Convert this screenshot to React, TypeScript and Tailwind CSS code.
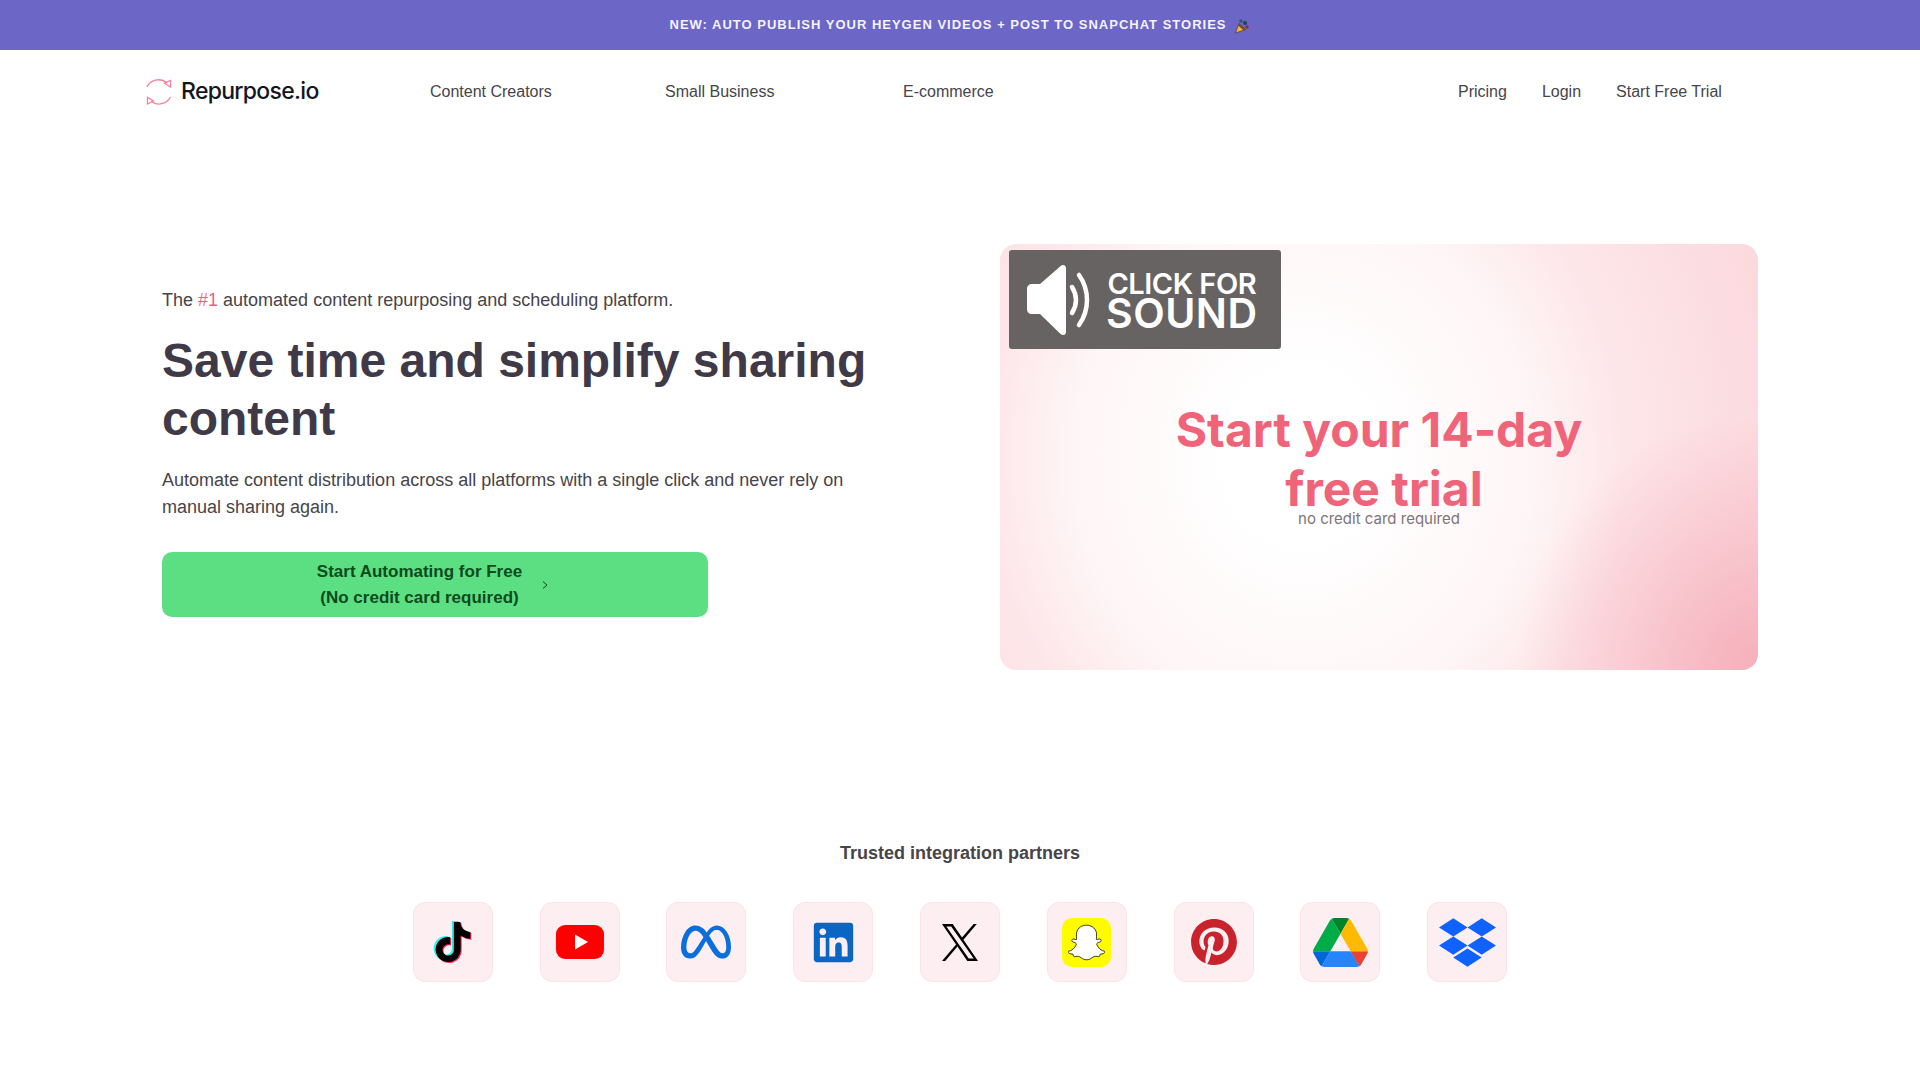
import React from "react";
import { SiTiktok, SiMeta, SiSnapchat, SiPinterest } from "react-icons/si";
import { FaDropbox, FaLinkedin } from "react-icons/fa";

const sans = "font-['Liberation_Sans',Arial,sans-serif]";
const inter = "font-['Inter',sans-serif]";

const Logo = () => (
  <svg width="26" height="30" viewBox="0 0 26 30" fill="none" stroke="#f4829b" strokeWidth="1.3">
    <path d="M1 10C4 3 14 0 21 6" />
    <path d="M24.500 3.500V10L18.500 6.200Z" />
    <path d="M24.500 20C21 27 11 29.500 5 24" />
    <path d="M1.500 20.500V27L7.500 24Z" />
  </svg>
);

const Speaker = () => (
  <svg width="66" height="70" viewBox="0 0 66 70" fill="#fff">
    <path d="M36 0c2 0 3 1 3 4v62c0 3-1 4-3 4-1.500 0-2.500-1-4-2.500L13 49H5c-3 0-5-2-5-5V24c0-3 2-5 5-5h8L32 2.500C33.500 1 34.500 0 36 0z" />
    <path d="M45 22c2.500 4 4 8 4 13s-1.500 9-4 13" fill="none" stroke="#fff" strokeWidth="4.500" strokeLinecap="round" />
    <path d="M52 10c5 7 8 15 8 25s-3 18-8 25" fill="none" stroke="#fff" strokeWidth="4.500" strokeLinecap="round" />
  </svg>
);

const Popper = () => (
  <svg width="16" height="16" viewBox="0 0 16 16" className="ml-[8px] mt-[1px]">
    <path d="M1.500 15L5 5.500l6.500 6z" fill="#f5b63a" stroke="#3a2a10" strokeWidth="0.600" />
    <path d="M5 5.500l6.500 6-2 .8-5.500-5z" fill="#6a4a22" />
    <circle cx="7" cy="3" r="1.800" fill="#1f5f7a" />
    <circle cx="11" cy="5" r="2" fill="#23414f" />
    <circle cx="13" cy="9" r="1.800" fill="#8a2f3d" />
  </svg>
);

const TikTok = () => (
  <span className="relative block w-[40px] h-[40px]">
    <SiTiktok size={40} className="absolute left-[-1.5px] top-[-1px] text-[#25f4ee]" />
    <SiTiktok size={40} className="absolute left-[1.5px] top-[1px] text-[#fe2c55]" />
    <SiTiktok size={40} className="absolute left-0 top-0 text-black" />
  </span>
);

const YouTube = () => (
  <svg width="48" height="34" viewBox="0 0 48 34">
    <rect width="48" height="34" rx="9" fill="#ff0000" />
    <path d="M19 9.500L32 17 19 24.500z" fill="#fff" />
  </svg>
);

const XLogo = () => (
  <svg width="36" height="37" viewBox="0 0 1200 1227" fill="#000">
    <path d="M714.163 519.284L1160.89 0H1055.03L667.137 450.887L357.328 0H0L468.492 681.821L0 1226.37H105.866L515.491 750.218L842.672 1226.37H1200L714.137 519.284H714.163ZM569.165 687.828L521.697 619.934L144.011 79.6944H306.615L611.412 515.685L658.88 583.579L1055.08 1150.3H892.476L569.165 687.854V687.828Z" />
  </svg>
);

const Snap = () => (
  <span className="flex w-[49px] h-[49px] items-center justify-center rounded-[10px] bg-[#fffc00]">
    <SiSnapchat size={37} className="text-white stroke-black [stroke-width:0.5px]" />
  </span>
);

const Drive = () => (
  <svg width="55" height="49" viewBox="0 0 87.3 78">
    <path d="m6.6 66.85 3.85 6.65c.8 1.4 1.95 2.5 3.3 3.3l13.75-23.8h-27.5c0 1.55.4 3.1 1.2 4.5z" fill="#0066da" />
    <path d="m43.65 25-13.75-23.8c-1.35.8-2.5 1.9-3.3 3.3l-25.4 44a9.06 9.06 0 0 0 -1.2 4.5h27.5z" fill="#00ac47" />
    <path d="m73.55 76.8c1.35-.8 2.5-1.9 3.3-3.3l1.6-2.75 7.65-13.25c.8-1.4 1.2-2.95 1.2-4.5h-27.502l5.852 11.5z" fill="#ea4335" />
    <path d="m43.65 25 13.75-23.8c-1.35-.8-2.9-1.2-4.5-1.2h-18.5c-1.6 0-3.15.45-4.5 1.2z" fill="#00832d" />
    <path d="m59.8 53h-32.3l-13.75 23.8c1.35.8 2.9 1.2 4.5 1.2h50.8c1.6 0 3.15-.45 4.5-1.2z" fill="#2684fc" />
    <path d="m73.4 26.5-12.7-22c-.8-1.4-1.95-2.5-3.3-3.3l-13.75 23.8 16.15 28h27.45c0-1.55-.4-3.1-1.2-4.5z" fill="#ffba00" />
  </svg>
);

const partners = [
  { name: "TikTok", icon: <TikTok /> },
  { name: "YouTube", icon: <YouTube /> },
  { name: "Meta", icon: <SiMeta size={50} className="text-[#0a6fdc]" /> },
  { name: "LinkedIn", icon: <FaLinkedin size={45} className="text-[#0a66c2]" /> },
  { name: "X", icon: <XLogo /> },
  { name: "Snapchat", icon: <Snap /> },
  { name: "Pinterest", icon: <SiPinterest size={46} className="text-[#c8232c]" /> },
  { name: "Google Drive", icon: <Drive /> },
  { name: "Dropbox", icon: <FaDropbox size={57} className="text-[#0f62fe]" /> },
];

const navLink = "text-[16px] leading-[24px] text-[#47444a]";

export default function App() {
  return (
    <div className={`min-h-[1080px] bg-white ${sans}`}>
      <div className="flex h-[50px] items-center justify-center bg-[#6c66c7] text-[13px] font-bold tracking-[1px] text-[#f4f3ff]">
        NEW: AUTO PUBLISH YOUR HEYGEN VIDEOS + POST TO SNAPCHAT STORIES
        <Popper />
      </div>

      <nav className="flex h-[83px] items-center pl-[146px]">
        <div className="flex w-[284px] items-center gap-[9px]">
          <Logo />
          <span className={`text-[23px] font-medium tracking-[-0.7px] text-[#14161f] ${inter}`}>Repurpose.io</span>
        </div>
        <a className={`${navLink} w-[235px]`}>Content Creators</a>
        <a className={`${navLink} w-[238px]`}>Small Business</a>
        <a className={`${navLink} w-[555px]`}>E-commerce</a>
        <div className="flex gap-[35px]">
          <a className={navLink}>Pricing</a>
          <a className={navLink}>Login</a>
          <a className={navLink}>Start Free Trial</a>
        </div>
      </nav>

      <section className="mt-[111px] flex pl-[162px]">
        <div className="w-[838px] pt-[44px]">
          <p className="text-[18px] leading-[24px] text-[#47444a]">
            The <span className="text-[#ee5f7e]">#1</span> automated content repurposing and scheduling platform.
          </p>
          <h1 className="mt-[20px] w-[740px] text-[48px] font-bold leading-[58px] text-[#403a48]">
            Save time and simplify sharing content
          </h1>
          <p className="mt-[19px] w-[720px] text-[18px] leading-[27px] text-[#47444a]">
            Automate content distribution across all platforms with a single click and never rely on manual sharing again.
          </p>
          <button className="mt-[31px] flex h-[65px] w-[546px] items-center justify-center gap-[20px] rounded-[10px] bg-[#5cdf82] pr-[5px] text-[17px] font-bold leading-[26px] text-[#0d4a1c]">
            <span>
              Start Automating for Free
              <br />
              (No credit card required)
            </span>
            <svg width="6" height="8" viewBox="0 0 6 8" fill="none" stroke="#0d4a1c" strokeWidth="1">
              <path d="M1 0.500L5 4 1 7.500" />
            </svg>
          </button>
        </div>

        <div className="relative h-[426px] w-[758px] overflow-hidden rounded-[16px] bg-[radial-gradient(ellipse_32%_60%_at_100%_100%,rgba(244,165,178,0.8)_0%,rgba(244,165,178,0)_100%),radial-gradient(ellipse_68%_135%_at_40%_50%,#ffffff_0%,#ffffff_15%,#fef5f6_45%,#fde6e9_62%,#fbd9dd_95%)] text-center">
          <div className="absolute left-[9px] top-[6px] flex h-[99px] w-[272px] items-center gap-[13px] rounded-[3px] bg-[#676363] pl-[18px] text-white">
            <Speaker />
            <div className={`${inter} font-semibold`}>
              <div className="text-[29px] leading-[30px] tracking-[-0.5px]">CLICK FOR</div>
              <div className="mt-[-4px] text-[41px] leading-[36px] tracking-[0.5px]">SOUND</div>
            </div>
          </div>
          <h2 className={`${inter} mx-auto mt-[156px] w-[480px] text-[48px] font-bold leading-[59px] text-[#ef6479]`}>
            Start your 14-day
            <br />
            <span className="relative left-[5px]">free trial</span>
          </h2>
          <p className={`${inter} mt-[-10px] text-[15px] leading-[22px] text-[#7d7478]`}>no credit card required</p>
        </div>
      </section>

      <section className="mt-[171px]">
        <h3 className="text-center text-[18px] font-bold leading-[24px] text-[#47444a]">Trusted integration partners</h3>
        <div className="mt-[37px] flex justify-center gap-[46.8px]">
          {partners.map((p) => (
            <div
              key={p.name}
              title={p.name}
              className="flex h-[80px] w-[80px] items-center justify-center rounded-[12px] border border-[#fbe4e9] bg-[#fdeef1]"
            >
              {p.icon}
            </div>
          ))}
        </div>
      </section>
    </div>
  );
}
